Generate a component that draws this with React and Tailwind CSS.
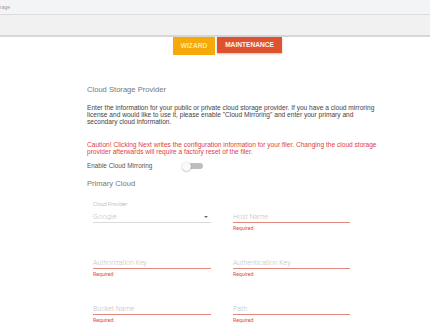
const fields = [
  ['Authorization Key', 'Authentication Key'],
  ['Bucket Name', 'Path'],
];

function Field({ label, placeholder, required = true, select = false }) {
  return (
    <div>
      <div className="h-[7px] text-[5.4px] leading-[7px] text-[#a8a8a8]">{label}</div>
      <div
        className={`mt-[3px] flex h-[12px] items-center justify-between ${
          select ? 'border-b border-[#d9d9d9]' : 'border-b-[1.5px] border-[#e3887c]'
        }`}
      >
        <span className={`leading-[10px] text-[#c2c2c2] ${select ? 'text-[7.6px]' : 'text-[7px]'}`}>{placeholder}</span>
        {select && (
          <span className="mr-[3px] h-0 w-0 border-x-[2px] border-t-[2.5px] border-x-transparent border-t-[#6b6b6b]" />
        )}
      </div>
      {required && <div className="mt-[2px] text-[5.2px] font-normal leading-[6px] text-[#e0474c]">Required</div>}
    </div>
  );
}

export default function App() {
  return (
    <div className="h-[336px] w-[430px] overflow-hidden bg-white font-['Liberation_Sans',Arial,sans-serif]">
      <div className="h-[15px] border-b border-[#dcdcdc] bg-[#f3f4f6] text-[5px] leading-[14px] text-[#9a9a9a]">rage</div>
      <div className="h-[22px] border-b-2 border-[#d7d7d7] bg-[#f1f1f1]" />

      <div className="flex items-start gap-[2px] pl-[173px]">
        <div className="flex h-[18px] w-[42px] items-center justify-center bg-[#f6a90a] text-[6.6px] font-bold text-[#fde7a6]">
          WIZARD
        </div>
        <div className="flex h-[16px] w-[65px] items-center justify-center bg-[#de522f] text-[6.6px] font-bold text-[#fff3ef] shadow-[0_1px_2px_rgba(0,0,0,0.25)]">
          MAINTENANCE
        </div>
      </div>

      <div className="w-[380px] pl-[87px]">
        <h2 className="mt-[30px] text-[7.6px] leading-[10px] text-[#777]">Cloud Storage Provider</h2>
        <p className="mt-[9px] w-[290px] text-[6.6px] leading-[7px] text-[#444]">
          Enter the information for your public or private cloud storage provider. If you have a cloud mirroring
          license and would like to use it, please enable "Cloud Mirroring" and enter your primary and secondary cloud
          information.
        </p>
        <p className="mt-[16px] w-[290px] text-[6.6px] leading-[7px] text-[#e2403f]">
          Caution! Clicking Next writes the configuration information for your filer. Changing the cloud storage
          provider afterwards will require a factory reset of the filer.
        </p>

        <div className="mt-[6px] flex h-[10px] items-center gap-[30px]">
          <div className="text-[6.4px] text-[#555]">Enable Cloud Mirroring</div>
          <div className="flex h-[10px] w-[21px] items-center">
            <div className="z-10 h-[9px] w-[9px] shrink-0 rounded-full bg-[#fafafa] shadow-[0_0.5px_1.5px_rgba(0,0,0,0.35)]" />
            <div className="-ml-[3px] h-[6px] w-[15px] shrink-0 rounded-r-full bg-[#bdbdbd]" />
          </div>
        </div>

        <h3 className="mt-[8px] text-[7.6px] leading-[10px] text-[#777]">Primary Cloud</h3>
      </div>

      <div className="ml-[93px] mt-[12px] grid grid-cols-[118px_117px] gap-x-[22px] gap-y-[16px] font-['Roboto',sans-serif] font-light">
        <Field label="Cloud Provider" placeholder="Google" required={false} select />
        <Field label="" placeholder="Host Name" />
        {fields.map(([a, b]) => (
          <>
            <Field key={a} label="" placeholder={a} />
            <Field key={b} label="" placeholder={b} />
          </>
        ))}
      </div>
    </div>
  );
}
